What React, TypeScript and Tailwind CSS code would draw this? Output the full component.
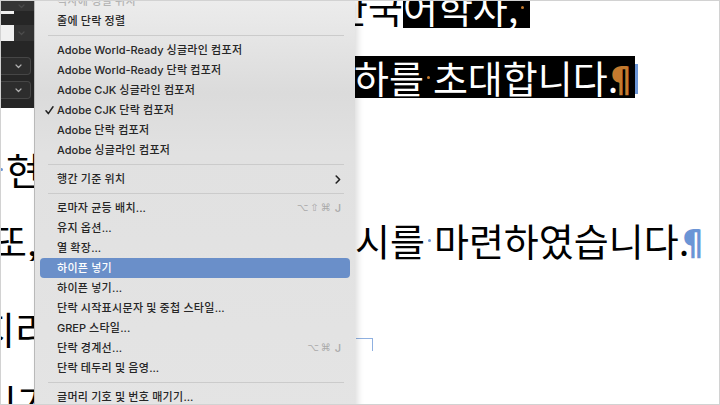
type Item =
  | "sep"
  | {
      label: string;
      faded?: boolean;
      checked?: boolean;
      active?: boolean;
      submenu?: boolean;
      keys?: string[];
    };

const items: Item[] = [
  { label: "격자에 정렬 위치", faded: true },
  { label: "줄에 단락 정렬" },
  "sep",
  { label: "Adobe World-Ready 싱글라인 컴포저" },
  { label: "Adobe World-Ready 단락 컴포저" },
  { label: "Adobe CJK 싱글라인 컴포저" },
  { label: "Adobe CJK 단락 컴포저", checked: true },
  { label: "Adobe 단락 컴포저" },
  { label: "Adobe 싱글라인 컴포저" },
  "sep",
  { label: "행간 기준 위치", submenu: true },
  "sep",
  { label: "로마자 균등 배치...", keys: ["⌥", "⇧", "⌘", "J"] },
  { label: "유지 옵션..." },
  { label: "열 확장..." },
  { label: "하이픈 넣기", active: true },
  { label: "하이픈 넣기..." },
  { label: "단락 시작표시문자 및 중첩 스타일..." },
  { label: "GREP 스타일..." },
  { label: "단락 경계선...", keys: ["⌥", "⌘", "J"] },
  { label: "단락 테두리 및 음영..." },
  "sep",
  { label: "글머리 기호 및 번호 매기기..." },
];

// hangul runs get a little extra tracking so they sit as wide as the mac font
function Label({ text }: { text: string }) {
  const parts = text.split(/([\u3131-\u318e\uac00-\ud7a3]+)/);
  return (
    <span className="whitespace-nowrap">
      {parts.map((p, i) =>
        /[\u3131-\u318e\uac00-\ud7a3]/.test(p) ? (
          <span key={i} className="tracking-[0.3px]">
            {p}
          </span>
        ) : (
          <span key={i}>{p}</span>
        )
      )}
    </span>
  );
}

function Check() {
  return (
    <svg width="9" height="9" viewBox="0 0 9 9" className="text-[#222]">
      <path d="M1 4.8 L3.3 7.6 L8 0.8" fill="none" stroke="currentColor" strokeWidth="1.5" strokeLinecap="round" strokeLinejoin="round" />
    </svg>
  );
}

function Chevron({ className }: { className: string }) {
  return (
    <svg width="6" height="9" viewBox="0 0 6 9" className={className}>
      <path d="M1.2 1 L4.6 4.5 L1.2 8" fill="none" stroke="currentColor" strokeWidth="1.6" strokeLinecap="round" strokeLinejoin="round" />
    </svg>
  );
}

function DownChevron({ className }: { className: string }) {
  return (
    <svg width="7" height="5" viewBox="0 0 7 5" className={className}>
      <path d="M1 1 L3.5 3.5 L6 1" fill="none" stroke="currentColor" strokeWidth="1.2" strokeLinecap="round" strokeLinejoin="round" />
    </svg>
  );
}

function MenuRow({ item }: { item: Exclude<Item, "sep"> }) {
  const tone = item.active
    ? "bg-[#6a8fc9] text-white"
    : item.faded
      ? "text-[#b4b4b4]"
      : "text-[#262626]";
  return (
    <div className={`mx-[5px] flex h-[20px] items-center rounded-[4px] pr-[9px] ${tone}`}>
      <div className="flex w-[17px] shrink-0 items-center pl-[5px]">{item.checked && <Check />}</div>
      <Label text={item.label} />
      {item.keys && (
        <div className="ml-auto flex gap-[2px] font-['DejaVu_Sans',sans-serif] text-[10px] text-[#a9a9a9]">
          {item.keys.map((k, i) => (
            <span key={i} className={k === "J" ? "ml-[2px] font-['Inter',sans-serif] text-[11px]" : ""}>
              {k}
            </span>
          ))}
        </div>
      )}
      {item.submenu && <Chevron className="ml-auto text-[#222]" />}
    </div>
  );
}

function Menu() {
  return (
    <div className="absolute left-[33px] top-0 h-[420px] w-[321px] overflow-hidden border-l border-[#b9b9b9] bg-[linear-gradient(180deg,#ececec_0%,#e6e6e6_8%,#dbdbdb_22%,#e1e1e1_36%,#e4e4e4_100%)] font-['Inter','Noto_Sans_CJK_KR',sans-serif] text-[11px] font-medium shadow-[3px_0_6px_rgba(0,0,0,0.13)]">
      <div className="-mt-[10px] flex flex-col">
        {items.map((it, i) =>
          it === "sep" ? (
            <div key={i} className="flex h-[9px] items-center pl-[13px] pr-[11px]">
              <div className="h-px w-full bg-[#cbcbcb]" />
            </div>
          ) : (
            <MenuRow key={i} item={it} />
          )
        )}
      </div>
    </div>
  );
}

function Dropdown() {
  return (
    <div className="mr-[3px] flex h-[18px] items-center justify-end rounded-r-[4px] border border-l-0 border-[#464646] bg-[#2d2d2d] pr-[8px]">
      <DownChevron className="text-[#b0b0b0]" />
    </div>
  );
}

function ControlPanel() {
  return (
    <div className="absolute left-0 top-0 flex h-[107px] w-[33px] flex-col bg-[#262626]">
      <div className="flex h-[10px] items-center justify-end bg-[#353535] pr-[9px]">
        <DownChevron className="text-[#4a4a4a]" />
      </div>
      <div className="flex h-[3px]">
        <div className="w-[13px] bg-[#f0f0f0]" />
      </div>
      <div className="h-[11px]" />
      <div className="flex h-[16px]">
        <div className="w-[13px] bg-[#f0f0f0]" />
        <div className="flex flex-1 items-center justify-end bg-[#333] pr-[9px]">
          <DownChevron className="text-[#4c4c4c]" />
        </div>
      </div>
      <div className="h-[16px]" />
      <Dropdown />
      <div className="h-[6px]" />
      <Dropdown />
    </div>
  );
}

function Dot({ className }: { className: string }) {
  return (
    <span className="inline-flex h-[42px] w-[9px] items-center justify-center align-top">
      <span className={`h-[3px] w-[3px] rounded-full ${className}`} />
    </span>
  );
}

function Document() {
  return (
    <div className="flex flex-col font-['Noto_Sans_CJK_KR',sans-serif] text-[38px] leading-[42px] text-black">
      <div className="-mt-[15px] h-[42px] whitespace-nowrap pl-[332px]">
        한국
        <span className="inline-block h-[42px] bg-black pr-[3px] align-top text-white">
          어학자,
          <Dot className="bg-[#c47a2e]" />
        </span>
      </div>
      <div className="mt-[28px] flex h-[42px] items-start whitespace-nowrap pl-[318px]">
        <span className="inline-block h-[42px] bg-black text-white">
          대하를
          <Dot className="bg-[#c47a2e]" />
          초대합니다.<span className="-ml-[14px] -mr-[3px] text-[34px] font-bold text-[#c47a2e]">¶</span>
        </span>
        <span className="mt-[8px] h-[30px] w-[3px] bg-[#6b95d6]" />
      </div>
      <div className="mt-[50px] h-[42px] whitespace-nowrap -ml-[39px]">
        표
        <Dot className="bg-[#6b95d6]" />
        현재
      </div>
      <div className="mt-[29px] flex h-[42px] whitespace-nowrap">
        <span className="-ml-[9px] w-[363px] shrink-0 overflow-hidden">또,</span>
        <span>
          시를
          <Dot className="bg-[#6b95d6]" />
          마련하였습니다.<span className="-ml-[13px] text-[34px] font-bold text-[#6b95d6]">¶</span>
        </span>
      </div>
      <div className="mt-[46px] h-[42px] whitespace-nowrap -ml-[21px]">지리</div>
      <div className="mt-[31px] h-[42px] whitespace-nowrap -ml-[19px]">시기</div>
    </div>
  );
}

export default function App() {
  return (
    <div className="relative h-[405px] w-[720px] overflow-hidden border border-[#d2d2d2] bg-white">
      <Document />
      {/* corner of a text frame peeking out beside the menu */}
      <div className="absolute left-[355px] top-[337px] h-[13px] w-[17px] border-r border-t border-[#8fb0e0]" />
      <ControlPanel />
      <Menu />
    </div>
  );
}
